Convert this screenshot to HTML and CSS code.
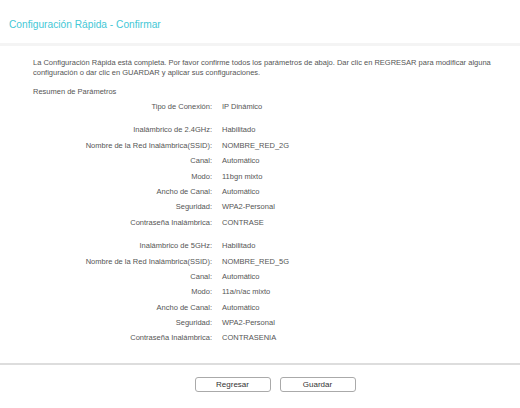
FILE: index.html
```html
<!DOCTYPE html>
<html lang="es">
<head>
  <meta charset="UTF-8">
  <title>Configuración Rápida - Confirmar</title>
  <link rel="stylesheet" href="styles.css">
</head>
<body>
  <div class="header">
    <h2>Configuración Rápida - Confirmar</h2>
  </div>

  <div class="content">
    <p class="intro">La Configuración Rápida está completa. Por favor confirme todos los parámetros de abajo. Dar clic en REGRESAR para modificar alguna configuración o dar clic en GUARDAR y aplicar sus configuraciones.</p>

    <p class="summary">Resumen de Parámetros</p>

    <div class="params">
      <div class="row"><span class="label">Tipo de Conexión:</span><span class="value">IP Dinámico</span></div>
    </div>

    <div class="params">
      <div class="row"><span class="label">Inalámbrico de 2.4GHz:</span><span class="value">Habilitado</span></div>
      <div class="row"><span class="label">Nombre de la Red Inalámbrica(SSID):</span><span class="value">NOMBRE_RED_2G</span></div>
      <div class="row"><span class="label">Canal:</span><span class="value">Automático</span></div>
      <div class="row"><span class="label">Modo:</span><span class="value">11bgn mixto</span></div>
      <div class="row"><span class="label">Ancho de Canal:</span><span class="value">Automático</span></div>
      <div class="row"><span class="label">Seguridad:</span><span class="value">WPA2-Personal</span></div>
      <div class="row"><span class="label">Contraseña Inalámbrica:</span><span class="value">CONTRASE</span></div>
    </div>

    <div class="params">
      <div class="row"><span class="label">Inalámbrico de 5GHz:</span><span class="value">Habilitado</span></div>
      <div class="row"><span class="label">Nombre de la Red Inalámbrica(SSID):</span><span class="value">NOMBRE_RED_5G</span></div>
      <div class="row"><span class="label">Canal:</span><span class="value">Automático</span></div>
      <div class="row"><span class="label">Modo:</span><span class="value">11a/n/ac mixto</span></div>
      <div class="row"><span class="label">Ancho de Canal:</span><span class="value">Automático</span></div>
      <div class="row"><span class="label">Seguridad:</span><span class="value">WPA2-Personal</span></div>
      <div class="row"><span class="label">Contraseña Inalámbrica:</span><span class="value">CONTRASENIA</span></div>
    </div>
  </div>

  <div class="footer">
    <button class="btn">Regresar</button>
    <button class="btn">Guardar</button>
  </div>
</body>
</html>
```

FILE: styles.css
```css
body {
  margin: 0;
  background: #fff;
  font-family: "Liberation Sans", Arial, sans-serif;
  font-size: 7.5px;
  color: #555;
}
.header {
  height: 43px;
  border-bottom: 3px solid #f4f4f4;
  padding-left: 9px;
}
.header h2 {
  margin: 0;
  padding-top: 19px;
  font-size: 10.2px;
  font-weight: normal;
  color: #45c8d6;
}
.content {
  padding: 12px 20px 0 33px;
}
.intro {
  margin: 0;
  line-height: 10px;
}
.summary {
  margin: 9px 0 3px;
}
.params {
  margin-bottom: 8px;
}
.row {
  display: flex;
  height: 15.4px;
  line-height: 15.4px;
}
.label {
  width: 179px;
  text-align: right;
}
.value {
  padding-left: 10px;
}
.footer {
  margin-top: 17px;
  border-top: 2px solid #ddd;
  padding: 12px 0 0 30px;
  display: flex;
  justify-content: center;
  gap: 9px;
}
.btn {
  width: 76px;
  height: 15px;
  padding: 0;
  background: #fff;
  border: 1px solid #aaa;
  border-radius: 3px;
  font-family: "Liberation Sans", Arial, sans-serif;
  font-size: 8px;
  color: #333;
}
```
